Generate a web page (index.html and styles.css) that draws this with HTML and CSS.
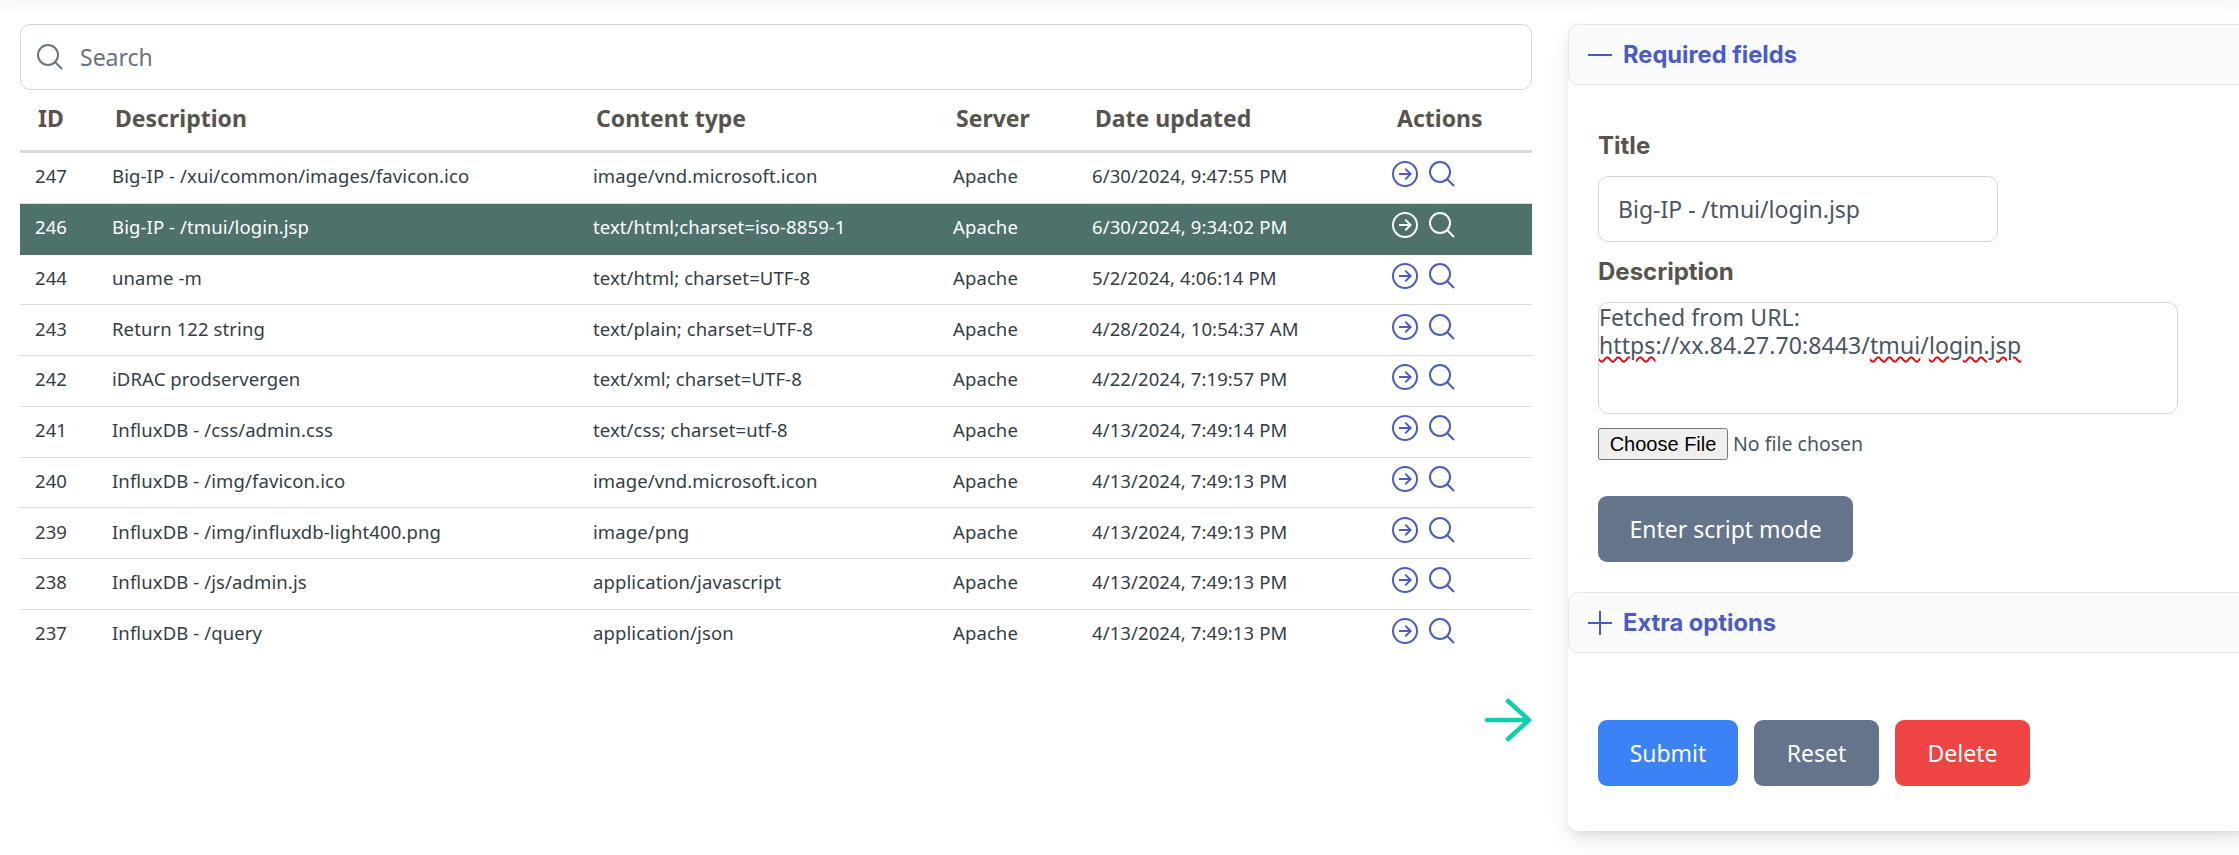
FILE: index.html
```html
<!DOCTYPE html>
<html lang="en">
<head>
  <meta charset="UTF-8">
  <title>Responses</title>
  <link rel="stylesheet" href="styles.css">
</head>
<body>
  <div class="topbar"></div>
  <div class="page">
    <div class="list-col">
      <div class="search">
        <svg class="search-icon" viewBox="0 0 24 24"><path d="M21 21l-5.197-5.197m0 0A7.5 7.5 0 105.196 5.196a7.5 7.5 0 0010.607 10.607z"/></svg>
        <input type="text" placeholder="Search">
      </div>

      <table class="grid">
        <colgroup>
          <col class="c-id"><col class="c-desc"><col class="c-type"><col class="c-server"><col class="c-date"><col class="c-actions">
        </colgroup>
        <thead>
          <tr><th>ID</th><th>Description</th><th>Content type</th><th>Server</th><th>Date updated</th><th class="th-actions">Actions</th></tr>
        </thead>
        <tbody>
          <tr>
            <td>247</td><td>Big-IP - /xui/common/images/favicon.ico</td><td>image/vnd.microsoft.icon</td><td>Apache</td><td>6/30/2024, 9:47:55 PM</td>
            <td><div class="actions"><svg viewBox="0 0 24 24"><path d="M12.2 8l4 4-4 4M7.5 12h8.7M21 12a9 9 0 11-18 0 9 9 0 0118 0z"/></svg><svg viewBox="0 0 24 24"><path d="M21 21l-5.197-5.197m0 0A7.5 7.5 0 105.196 5.196a7.5 7.5 0 0010.607 10.607z"/></svg></div></td>
          </tr>
          <tr class="selected">
            <td>246</td><td>Big-IP - /tmui/login.jsp</td><td>text/html;charset=iso-8859-1</td><td>Apache</td><td>6/30/2024, 9:34:02 PM</td>
            <td><div class="actions"><svg viewBox="0 0 24 24"><path d="M12.2 8l4 4-4 4M7.5 12h8.7M21 12a9 9 0 11-18 0 9 9 0 0118 0z"/></svg><svg viewBox="0 0 24 24"><path d="M21 21l-5.197-5.197m0 0A7.5 7.5 0 105.196 5.196a7.5 7.5 0 0010.607 10.607z"/></svg></div></td>
          </tr>
          <tr>
            <td>244</td><td>uname -m</td><td>text/html; charset=UTF-8</td><td>Apache</td><td>5/2/2024, 4:06:14 PM</td>
            <td><div class="actions"><svg viewBox="0 0 24 24"><path d="M12.2 8l4 4-4 4M7.5 12h8.7M21 12a9 9 0 11-18 0 9 9 0 0118 0z"/></svg><svg viewBox="0 0 24 24"><path d="M21 21l-5.197-5.197m0 0A7.5 7.5 0 105.196 5.196a7.5 7.5 0 0010.607 10.607z"/></svg></div></td>
          </tr>
          <tr>
            <td>243</td><td>Return 122 string</td><td>text/plain; charset=UTF-8</td><td>Apache</td><td>4/28/2024, 10:54:37 AM</td>
            <td><div class="actions"><svg viewBox="0 0 24 24"><path d="M12.2 8l4 4-4 4M7.5 12h8.7M21 12a9 9 0 11-18 0 9 9 0 0118 0z"/></svg><svg viewBox="0 0 24 24"><path d="M21 21l-5.197-5.197m0 0A7.5 7.5 0 105.196 5.196a7.5 7.5 0 0010.607 10.607z"/></svg></div></td>
          </tr>
          <tr>
            <td>242</td><td>iDRAC prodservergen</td><td>text/xml; charset=UTF-8</td><td>Apache</td><td>4/22/2024, 7:19:57 PM</td>
            <td><div class="actions"><svg viewBox="0 0 24 24"><path d="M12.2 8l4 4-4 4M7.5 12h8.7M21 12a9 9 0 11-18 0 9 9 0 0118 0z"/></svg><svg viewBox="0 0 24 24"><path d="M21 21l-5.197-5.197m0 0A7.5 7.5 0 105.196 5.196a7.5 7.5 0 0010.607 10.607z"/></svg></div></td>
          </tr>
          <tr>
            <td>241</td><td>InfluxDB - /css/admin.css</td><td>text/css; charset=utf-8</td><td>Apache</td><td>4/13/2024, 7:49:14 PM</td>
            <td><div class="actions"><svg viewBox="0 0 24 24"><path d="M12.2 8l4 4-4 4M7.5 12h8.7M21 12a9 9 0 11-18 0 9 9 0 0118 0z"/></svg><svg viewBox="0 0 24 24"><path d="M21 21l-5.197-5.197m0 0A7.5 7.5 0 105.196 5.196a7.5 7.5 0 0010.607 10.607z"/></svg></div></td>
          </tr>
          <tr>
            <td>240</td><td>InfluxDB - /img/favicon.ico</td><td>image/vnd.microsoft.icon</td><td>Apache</td><td>4/13/2024, 7:49:13 PM</td>
            <td><div class="actions"><svg viewBox="0 0 24 24"><path d="M12.2 8l4 4-4 4M7.5 12h8.7M21 12a9 9 0 11-18 0 9 9 0 0118 0z"/></svg><svg viewBox="0 0 24 24"><path d="M21 21l-5.197-5.197m0 0A7.5 7.5 0 105.196 5.196a7.5 7.5 0 0010.607 10.607z"/></svg></div></td>
          </tr>
          <tr>
            <td>239</td><td>InfluxDB - /img/influxdb-light400.png</td><td>image/png</td><td>Apache</td><td>4/13/2024, 7:49:13 PM</td>
            <td><div class="actions"><svg viewBox="0 0 24 24"><path d="M12.2 8l4 4-4 4M7.5 12h8.7M21 12a9 9 0 11-18 0 9 9 0 0118 0z"/></svg><svg viewBox="0 0 24 24"><path d="M21 21l-5.197-5.197m0 0A7.5 7.5 0 105.196 5.196a7.5 7.5 0 0010.607 10.607z"/></svg></div></td>
          </tr>
          <tr>
            <td>238</td><td>InfluxDB - /js/admin.js</td><td>application/javascript</td><td>Apache</td><td>4/13/2024, 7:49:13 PM</td>
            <td><div class="actions"><svg viewBox="0 0 24 24"><path d="M12.2 8l4 4-4 4M7.5 12h8.7M21 12a9 9 0 11-18 0 9 9 0 0118 0z"/></svg><svg viewBox="0 0 24 24"><path d="M21 21l-5.197-5.197m0 0A7.5 7.5 0 105.196 5.196a7.5 7.5 0 0010.607 10.607z"/></svg></div></td>
          </tr>
          <tr class="last">
            <td>237</td><td>InfluxDB - /query</td><td>application/json</td><td>Apache</td><td>4/13/2024, 7:49:13 PM</td>
            <td><div class="actions"><svg viewBox="0 0 24 24"><path d="M12.2 8l4 4-4 4M7.5 12h8.7M21 12a9 9 0 11-18 0 9 9 0 0118 0z"/></svg><svg viewBox="0 0 24 24"><path d="M21 21l-5.197-5.197m0 0A7.5 7.5 0 105.196 5.196a7.5 7.5 0 0010.607 10.607z"/></svg></div></td>
          </tr>
        </tbody>
      </table>

      <div class="arrow-row">
        <svg class="go-arrow" viewBox="0 0 50 44"><path d="M5 22h42M26 3l21 19-21 19"/></svg>
      </div>
    </div>

    <div class="panel">
      <div class="acc-head">
        <svg viewBox="0 0 24 24"><path d="M0 12h24"/></svg>
        <span>Required fields</span>
      </div>
      <div class="acc-body">
        <label class="field-label title-label">Title</label>
        <input class="title-input" type="text" value="Big-IP - /tmui/login.jsp">
        <label class="field-label desc-label">Description</label>
        <div class="desc-box">Fetched from URL:<br><span class="typo">https</span>://xx.84.27.70:8443/<span class="typo">tmui</span>/<span class="typo">login.jsp</span></div>
        <input class="file-input" type="file">
        <button class="btn btn-slate script-btn">Enter script mode</button>
      </div>
      <div class="acc-head">
        <svg viewBox="0 0 24 24"><path d="M0 12h24M12 0v24"/></svg>
        <span>Extra options</span>
      </div>
      <div class="form-actions">
        <button class="btn btn-blue">Submit</button>
        <button class="btn btn-slate">Reset</button>
        <button class="btn btn-red">Delete</button>
      </div>
    </div>
  </div>
</body>
</html>
```
FILE: styles.css
```css
html, body {
  margin: 0;
  height: 855px;
  overflow: hidden;
  background-color: #ffffff;
}

body {
  font-family: "Noto Sans", sans-serif;
  color: #44403c;
}

.topbar {
  height: 0;
  box-shadow: 0 0 14px 4px rgba(0, 0, 0, 0.07);
}

.page {
  display: flex;
  gap: 36px;
  padding: 24px 0 0 20px;
}

.list-col {
  width: 1512px;
  flex: none;
}

/* search */
.search {
  display: flex;
  align-items: center;
  box-sizing: border-box;
  height: 66px;
  padding-left: 13px;
  border: 1px solid #d1d5db;
  border-radius: 10px;
}

.search-icon {
  width: 32px;
  height: 32px;
  fill: none;
  stroke: #6b7280;
  stroke-width: 1.5;
}

.search input {
  flex: 1;
  margin-left: 12px;
  border: none;
  outline: none;
  font: 23px "Noto Sans", sans-serif;
  color: #374151;
}

.search input::placeholder {
  color: #6b7280;
}

/* table */
.grid {
  width: 1512px;
  table-layout: fixed;
  border-collapse: collapse;
}

.c-id { width: 77px; }
.c-desc { width: 481px; }
.c-type { width: 360px; }
.c-server { width: 139px; }
.c-date { width: 297px; }
.c-actions { width: 158px; }

.grid th {
  height: 56px;
  padding: 0 0 4px 18px;
  text-align: left;
  font-size: 23px;
  font-weight: 700;
  color: #57534e;
  border-bottom: 3px solid #d9d9d9;
}

.grid th.th-actions {
  padding-left: 23px;
}

.grid td {
  height: 45.75px;
  padding: 0 0 4px 15px;
  font-size: 18.5px;
  letter-spacing: 0.1px;
  color: #333d47;
  border-bottom: 1px solid #dcdcdc;
}

.grid tr.last td {
  border-bottom: none;
}

.grid tr.selected td {
  background-color: #4e716c;
  color: #ffffff;
  border-bottom-color: #4e716c;
}

.actions {
  display: flex;
  gap: 5px;
  margin-top: -3px;
}

.actions svg {
  width: 32px;
  height: 32px;
  fill: none;
  stroke: #4a5bc7;
  stroke-width: 1.5;
}

.selected .actions svg {
  stroke: #ffffff;
}

.arrow-row {
  display: flex;
  justify-content: flex-end;
  margin-top: 38px;
}

.go-arrow {
  width: 50px;
  height: 44px;
  fill: none;
  stroke: #0ccfae;
  stroke-width: 4.5;
  stroke-linecap: round;
  stroke-linejoin: round;
}

/* right panel */
.panel {
  flex: 1;
  height: 807px;
  margin-right: -12px;
  border-radius: 10px;
  background-color: #ffffff;
  box-shadow: 0 10px 25px -3px rgba(0, 0, 0, 0.12), 0 4px 8px -4px rgba(0, 0, 0, 0.1);
}

.acc-head {
  display: flex;
  align-items: center;
  gap: 11px;
  height: 59px;
  padding-left: 19px;
  background-color: #f9fafb;
  border: 1px solid #e5e7eb;
  border-radius: 10px 0 0 10px;
  font-family: Inter, sans-serif;
  font-size: 23.7px;
  font-weight: 700;
  color: #4a5bc7;
}

.acc-head svg {
  width: 24px;
  height: 24px;
  fill: none;
  stroke: #4a5bc7;
  stroke-width: 2;
}

.acc-body {
  padding: 0 0 0 30px;
}

.field-label {
  display: block;
  font-family: Inter, sans-serif;
  font-size: 24px;
  font-weight: 700;
  color: #57534e;
}

.title-label {
  padding-top: 48px;
  line-height: 26px;
}

.title-input {
  display: block;
  box-sizing: border-box;
  width: 400px;
  height: 66px;
  margin-top: 17px;
  padding: 0 19px;
  border: 1px solid #d1d5db;
  border-radius: 10px;
  outline: none;
  font: 23px "Noto Sans", sans-serif;
  color: #4b5563;
}

.desc-label {
  margin-top: 17px;
  line-height: 26px;
}

.desc-box {
  box-sizing: border-box;
  width: 580px;
  height: 112px;
  margin-top: 17px;
  padding: 0;
  border: 1px solid #d1d5db;
  border-radius: 10px;
  font-size: 23px;
  letter-spacing: 0.1px;
  line-height: 28px;
  color: #4b5563;
}

.typo {
  text-decoration: underline wavy #f00000 1.5px;
  text-underline-offset: 2px;
}

.file-input {
  display: block;
  margin-top: 14px;
  font: 19.5px "Noto Sans", sans-serif;
  color: #4b5563;
}

.file-input::file-selector-button {
  height: 32px;
  width: 130px;
  margin-right: 5px;
  padding: 0;
  font: 20px "Liberation Sans", sans-serif;
  color: #000000;
}

.btn {
  height: 66px;
  border: none;
  border-radius: 9px;
  font: 23px "Noto Sans", sans-serif;
  color: #ffffff;
}

.btn-slate { background-color: #64748b; }
.btn-blue { background-color: #3b82f6; }
.btn-red { background-color: #ef4444; }

.script-btn {
  display: block;
  width: 255px;
  margin-top: 36px;
  margin-bottom: 30px;
}

.form-actions {
  display: flex;
  gap: 16px;
  padding: 67px 0 0 30px;
}

.form-actions .btn-blue { width: 140px; }
.form-actions .btn-slate { width: 125px; }
.form-actions .btn-red { width: 135px; }
```
